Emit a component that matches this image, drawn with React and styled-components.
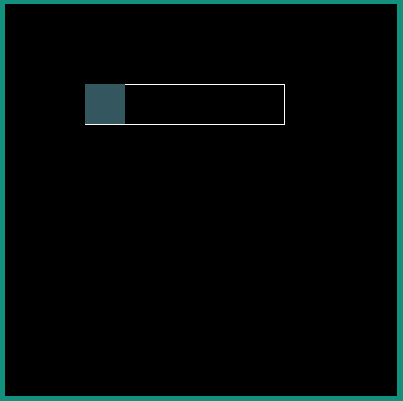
import styled, { createGlobalStyle } from "styled-components";

const GlobalStyle = createGlobalStyle`
  html, body {
    margin: 0;
    padding: 0;
    background: #000;
  }
`;

const Frame = styled.div`
  box-sizing: border-box;
  height: 100vh;
  width: 100vw;
  background: #000;
  border-style: solid;
  border-color: #14907e;
  border-width: 4px 6px 5px 5px;
  padding: 80px;
`;

const Track = styled.div`
  position: relative;
  box-sizing: border-box;
  width: 200px;
  height: 41px;
  border: 1px solid #fff;
`;

const Fill = styled.div`
  position: absolute;
  top: -1px;
  left: -1px;
  height: 40px;
  background: #34575f;
`;

const App = () => {
  const progress = 20;
  return (
    <>
      <GlobalStyle />
      <Frame>
        <Track>
          <Fill style={{ width: `${(progress / 100) * 200}px` }} />
        </Track>
      </Frame>
    </>
  );
};

export default App;
